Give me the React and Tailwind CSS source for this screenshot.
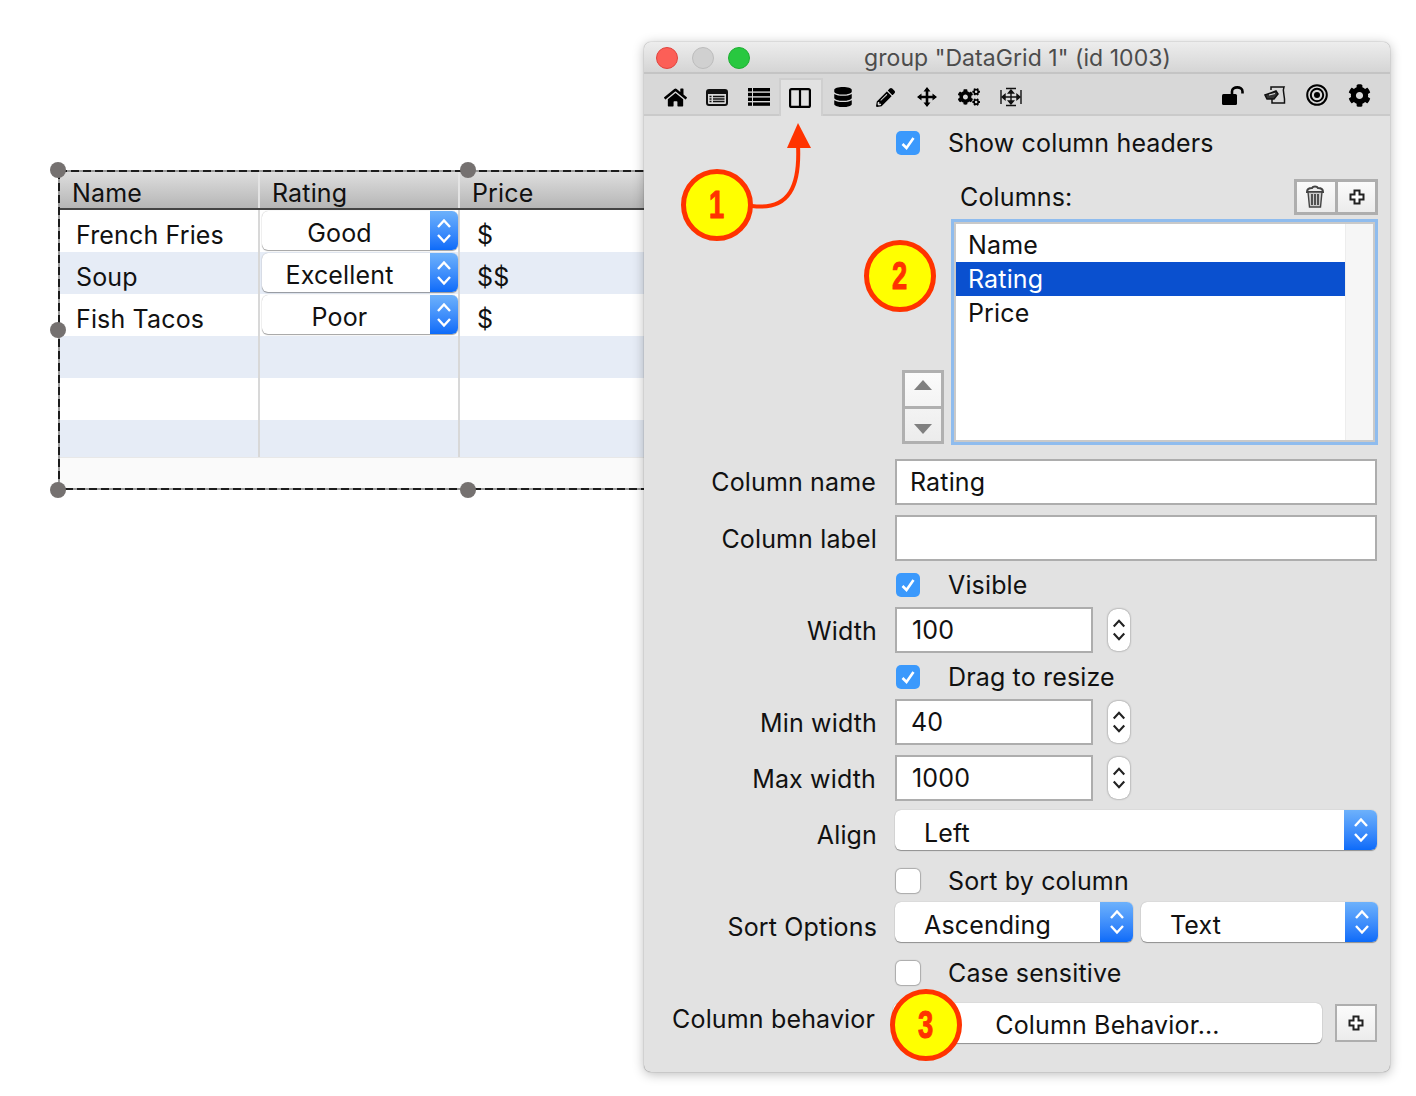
import { FaHome, FaDatabase, FaPencilAlt, FaCogs, FaCog } from "react-icons/fa";

const font = { fontFamily: "Inter, 'Liberation Sans', sans-serif", letterSpacing: "0.15px" };

function Chevrons({ className = "text-white", w = 16, h = 30 }) {
  return (
    <svg width={w} height={h} viewBox="0 0 16 30" fill="none" stroke="currentColor" strokeWidth="2.4" className={className}>
      <path d="M2 11 L8 4.5 L14 11" />
      <path d="M2 19 L8 25.5 L14 19" />
    </svg>
  );
}

function Select({ label, className, textClass = "justify-center", blue = "w-[33px]" }) {
  return (
    <div className={`flex bg-white rounded-[6px] shadow-[0_1px_1px_rgba(0,0,0,0.35),0_0_1px_rgba(0,0,0,0.3)] overflow-hidden ${className}`}>
      <div className={`flex-1 flex items-center text-[#111] ${textClass}`}>{label}</div>
      <div className={`${blue} flex items-center justify-center bg-gradient-to-b from-[#6db1fb] to-[#0b6bf9]`}>
        <Chevrons />
      </div>
    </div>
  );
}

function Check({ on }) {
  return on ? (
    <div className="w-6 h-6 rounded-[5px] bg-[#3b99fc] flex items-center justify-center shrink-0">
      <svg width="16" height="14" viewBox="0 0 16 14" fill="none" stroke="white" strokeWidth="2.6">
        <path d="M2.5 8 L6.5 12 L13.5 2" />
      </svg>
    </div>
  ) : (
    <div className="w-6 h-6 rounded-[5px] bg-white shadow-[0_0_1px_1px_rgba(0,0,0,0.25)] shrink-0" />
  );
}

function Row({ label, labelClass = "", className = "", children }) {
  return (
    <div className={`flex items-center ${className}`}>
      <div className={`w-[233px] text-right text-[#111] whitespace-nowrap ${labelClass}`}>{label}</div>
      <div className="ml-[18px] flex-1 flex items-center">{children}</div>
    </div>
  );
}

function CheckRow({ on, label, className }) {
  return (
    <Row className={`h-6 ${className}`}>
      <div className="ml-[1px]"><Check on={on} /></div>
      <span className="ml-7 text-[#111] whitespace-nowrap">{label}</span>
    </Row>
  );
}

function TextInput({ value, className, pad = "pl-[13px]" }) {
  return (
    <div className={`h-[46px] bg-white border-2 border-[#adadad] flex items-center text-[#111] ${pad} ${className}`}>{value}</div>
  );
}

function Stepper() {
  return (
    <div className="ml-[15px] w-[22px] h-[42px] rounded-[9px] bg-white shadow-[0_0_2px_rgba(0,0,0,0.5)] flex items-center justify-center">
      <Chevrons className="text-[#222]" w={14} h={28} />
    </div>
  );
}

function PlusGlyph() {
  return (
    <svg width="16" height="16" viewBox="0 0 16 16" fill="#fff" stroke="#222" strokeWidth="2">
      <path d="M5.5 1.5 H10.5 V5.5 H14.5 V10.5 H10.5 V14.5 H5.5 V10.5 H1.5 V5.5 H5.5 Z" />
    </svg>
  );
}

function ToolBtn({ children }) {
  return (
    <div className="w-[42px] h-[36px] pt-[6px] flex items-center justify-center text-black">
      {children}
    </div>
  );
}

function TopGrid() {
  const rows = [
    ["French Fries", "Good", "$", "bg-white"],
    ["Soup", "Excellent", "$$", "bg-[#e6ecf6]"],
    ["Fish Tacos", "Poor", "$", "bg-white"],
    ["", "", "", "bg-[#e6ecf6]"],
    ["", "", "", "bg-white"],
    ["", "", "", "bg-[#e6ecf6]"],
  ];
  return (
    <div className="absolute left-[60px] top-[172px] w-[600px] h-[316px] bg-[#fafafa] text-[25px] text-[#111]" style={font}>
      <div className="flex h-[38px] border-b-2 border-[#444] bg-gradient-to-b from-[#dedede] to-[#b6b6b6]">
        <div className="w-[200px] pl-[12px] pt-[8px] border-r-2 border-[#e4e4e4] flex items-center">Name</div>
        <div className="w-[200px] pl-[12px] pt-[8px] border-r-2 border-[#e4e4e4] flex items-center">Rating</div>
        <div className="flex-1 pl-[12px] pt-[8px] flex items-center">Price</div>
      </div>
      {rows.map((r, i) => (
        <div key={i} className={`flex ${i === 5 ? "h-[38px] border-b border-[#e8e8e8]" : "h-[42px]"} ${r[3]}`}>
          <div className="w-[200px] pl-[16px] pt-[9px] border-r-2 border-[#d8d8d8] leading-[32px]">{r[0]}</div>
          <div className="w-[200px] pt-[1px] border-r-2 border-[#d8d8d8] pl-[2px]">
            {r[1] && <Select label={r[1]} className="h-[39px] w-[196px]" textClass="justify-center pr-[13px] pt-[6px]" blue="w-[28px]" />}
          </div>
          <div className="flex-1 pl-[17px] pt-[9px] leading-[32px]">{r[2]}</div>
        </div>
      ))}
    </div>
  );
}

function Marquee() {
  const handles = [
    "left-[50px] top-[162px]",
    "left-[460px] top-[162px]",
    "left-[50px] top-[322px]",
    "left-[50px] top-[482px]",
    "left-[460px] top-[482px]",
  ];
  return (
    <>
      <svg className="absolute left-0 top-0" width="700" height="500" fill="none">
        <rect x="59" y="171" width="640" height="318" stroke="#9a9a9a" strokeWidth="2" />
        <rect x="59" y="171" width="640" height="318" stroke="#1c1c1c" strokeWidth="2" strokeDasharray="8 4" />
      </svg>
      {handles.map((h) => (
        <div key={h} className={`absolute w-4 h-4 rounded-full bg-[#757170] ${h}`} />
      ))}
    </>
  );
}

function Badge({ n, className }) {
  return (
    <div className={`absolute w-[72px] h-[72px] rounded-full bg-[#ffff00] border-[5px] border-[#ff3300] flex items-center justify-center ${className}`}>
      <span className="inline-block scale-x-[0.72] text-[38px] font-bold text-[#ff3300] leading-none" style={{ fontFamily: "'Liberation Sans', sans-serif", WebkitTextStroke: "1px #ff3300" }}>{n}</span>
    </div>
  );
}

export default function App() {
  return (
    <div className="relative w-[1416px] h-[1096px] bg-white overflow-hidden">
      <TopGrid />
      <Marquee />

      {/* Inspector window */}
      <div className="absolute left-[644px] top-[42px] w-[746px] h-[1030px] rounded-[7px] bg-[#e2e2e2] overflow-hidden shadow-[0_2px_12px_rgba(0,0,0,0.28),0_0_1px_rgba(0,0,0,0.6)] text-[25px]" style={font}>
        {/* Title bar */}
        <div className="relative h-[32px] bg-gradient-to-b from-[#ededed] to-[#d5d5d5] border-b-2 border-[#c4c4c4] flex items-center justify-center pt-[2px]">
          <div className="absolute left-[12px] top-[5px] flex gap-[14px]">
            <div className="w-[22px] h-[22px] rounded-full bg-[#fc5f57] border border-[#e0443e]" />
            <div className="w-[22px] h-[22px] rounded-full bg-[#d0d0d0] border border-[#bcbcbc]" />
            <div className="w-[22px] h-[22px] rounded-full bg-[#28c840] border border-[#1fae33]" />
          </div>
          <span className="text-[#4c4c4c] text-[23px] ml-[1px] tracking-[0.05px]">group "DataGrid 1" (id 1003)</span>
        </div>

        {/* Toolbar */}
        <div className="relative h-[42px] bg-[#d8d8d8] border-b-2 border-[#cacaca] flex items-center justify-between px-[10px]">
          <div className="flex items-center">
            <ToolBtn><FaHome size={23} /></ToolBtn>
            <ToolBtn>
              <svg width="22" height="17" viewBox="0 0 22 17" fill="none" stroke="#111">
                <rect x="1" y="1" width="20" height="15" rx="2" strokeWidth="2" />
                <path d="M1 3.2 H21" strokeWidth="3.6" />
                <path d="M3.5 7.5 H5.5 M7 7.5 H18.5 M3.5 10 H5.5 M7 10 H18.5 M3.5 12.5 H5.5 M7 12.5 H18.5" strokeWidth="1.3" />
              </svg>
            </ToolBtn>
            <ToolBtn>
              <svg width="22" height="18" viewBox="0 0 22 18" fill="#000">
                <rect x="0" y="0" width="4" height="3.4" /><rect x="5" y="0" width="17" height="3.4" />
                <rect x="0" y="4.8" width="4" height="3.4" /><rect x="5" y="4.8" width="17" height="3.4" />
                <rect x="0" y="9.6" width="4" height="3.4" /><rect x="5" y="9.6" width="17" height="3.4" />
                <rect x="0" y="14.4" width="4" height="3.4" /><rect x="5" y="14.4" width="17" height="3.4" />
              </svg>
            </ToolBtn>
            <div className="relative z-10 w-[44px] h-[38px] -mx-[1px] -mb-[4px] self-end bg-[#e2e2e2] border-2 border-b-0 border-[#cfcfcf] flex items-center justify-center pr-[2px]">
              <svg width="22" height="20" viewBox="0 0 22 20" fill="none" stroke="#000" strokeWidth="2.2">
                <rect x="1.1" y="1.1" width="19.8" height="17.8" rx="1.5" />
                <path d="M11 1 V19" />
              </svg>
            </div>
            <ToolBtn><FaDatabase size={20} /></ToolBtn>
            <ToolBtn><FaPencilAlt size={19} /></ToolBtn>
            <ToolBtn>
              <svg width="20" height="20" viewBox="0 0 20 20" fill="#000" stroke="#000">
                <path d="M10 2 V18 M2 10 H18" strokeWidth="2.6" />
                <path d="M10 0 L13.5 4.5 H6.5 Z M10 20 L13.5 15.5 H6.5 Z M0 10 L4.5 6.5 V13.5 Z M20 10 L15.5 6.5 V13.5 Z" strokeWidth="0" />
              </svg>
            </ToolBtn>
            <ToolBtn><FaCogs size={22} /></ToolBtn>
            <ToolBtn>
              <svg width="22" height="20" viewBox="0 0 22 20" fill="none" stroke="#111" strokeWidth="1.4">
                <path d="M1 3 V17 M21 3 V17 M6 1.5 H16 M6 18.5 H16 M11 3 V17 M2 10 H20" />
                <path d="M2 10 L5 7.5 V12.5 Z M20 10 L17 7.5 V12.5 Z M11 3 L8.5 6 H13.5 Z M11 17 L8.5 14 H13.5 Z" fill="#111" />
              </svg>
            </ToolBtn>
          </div>
          <div className="flex items-center -mt-[4px]">
            <ToolBtn>
              <svg width="22" height="19" viewBox="0 0 22 19" fill="#000">
                <rect x="0" y="8" width="15" height="11" rx="1.5" />
                <path d="M10 8 V5.5 C10 0 20.5 0 20.5 5.5 V7.5" fill="none" stroke="#000" strokeWidth="2.6" />
              </svg>
            </ToolBtn>
            <ToolBtn>
              <svg width="22" height="20" viewBox="0 0 22 20" fill="none" stroke="#111" strokeWidth="1.5">
                <path d="M7 5 V2 H20 C18 6 21 9 20.5 18 H8 V14" />
                <path d="M1 10 L12 6 L14 9 L10 14 L3 14 Z" fill="#333" />
                <path d="M5 10 L11 8.5" stroke="#ddd" strokeWidth="1.2" />
              </svg>
            </ToolBtn>
            <ToolBtn>
              <svg width="22" height="22" viewBox="0 0 22 22" fill="none" stroke="#000">
                <circle cx="11" cy="11" r="9.8" strokeWidth="2" />
                <circle cx="11" cy="11" r="6.2" strokeWidth="2" />
                <circle cx="11" cy="11" r="3" fill="#000" strokeWidth="0" />
              </svg>
            </ToolBtn>
            <ToolBtn><FaCog size={23} /></ToolBtn>
          </div>
        </div>

        {/* Body */}
        <div className="pr-[13px] pt-[12px] leading-[30px]">
          <Row className="h-[30px]">
            <div className="ml-[1px]"><Check on /></div>
            <span className="ml-7 text-[#111] whitespace-nowrap">Show column headers</span>
          </Row>

          <div className="mt-[21px] h-[36px] flex items-center">
            <span className="ml-[316px] text-[#111]">Columns:</span>
            <div className="ml-auto -mr-[1px] flex">
              <div className="w-[44px] h-[36px] border-[3px] border-[#aeaeae] bg-gradient-to-b from-[#fbfbfb] to-[#ececec] flex items-center justify-center pr-[2px]">
                <svg width="20" height="24" viewBox="0 0 20 24" fill="none" stroke="#444" strokeWidth="1.4">
                  <path d="M2 7 C2 3 6 3 7 3 C8 1 12 1 13 3 C15 3 18 3 18 7 Z" fill="#eee" strokeWidth="2" />
                  <path d="M3 7 L4.5 22 H15.5 L17 7 Z" fill="#ccc" />
                  <path d="M7 9 V20 M10 9 V20 M13 9 V20" strokeWidth="1.8" />
                </svg>
              </div>
              <div className="w-[40px] h-[36px] border-[3px] border-l-0 border-[#aeaeae] bg-gradient-to-b from-[#fbfbfb] to-[#ececec] flex items-center justify-center">
                <PlusGlyph />
              </div>
            </div>
          </div>

          <div className="mt-[4px] h-[226px] flex items-end">
            <div className="ml-[258px] w-[42px] h-[74px] border-[3px] border-[#b0b0b0] bg-gradient-to-b from-[#fbfbfb] to-[#ececec] mb-[1px] flex flex-col">
              <div className="flex-1 flex items-center justify-center pb-[8px] border-b-[3px] border-[#b0b0b0]">
                <svg width="18" height="10" viewBox="0 0 18 10" fill="#808080"><path d="M9 0 L18 10 H0 Z" /></svg>
              </div>
              <div className="flex-1 flex items-center justify-center pt-[8px]">
                <svg width="18" height="10" viewBox="0 0 18 10" fill="#808080"><path d="M9 10 L18 0 H0 Z" /></svg>
              </div>
            </div>
            <div className="ml-[7px] w-[427px] -mr-[1px] h-[226px] border-[3px] border-[#8fbcee]">
              <div className="h-full border-2 border-[#c9c9c9] bg-white flex">
                <div className="flex-1 pt-[4px] text-[#111]">
                  <div className="h-[34px] pl-[12px] flex items-center">Name</div>
                  <div className="h-[34px] pl-[12px] flex items-center bg-[#0a50cf] text-white">Rating</div>
                  <div className="h-[34px] pl-[12px] flex items-center">Price</div>
                </div>
                <div className="w-[28px] bg-[#f6f6f6] border-l border-[#ededed]" />
              </div>
            </div>
          </div>

          <Row label="Column name" labelClass="pr-[1px]" className="mt-[14px] h-[46px]"><TextInput value="Rating" className="flex-1" /></Row>
          <Row label="Column label" labelClass="pt-[2px]" className="mt-[10px] h-[46px]"><TextInput className="flex-1" /></Row>
          <CheckRow on label="Visible" className="mt-[12px]" />
          <Row label="Width" labelClass="pt-[2px]" className="mt-[10px] h-[46px]"><TextInput value="100" pad="pl-[15px]" className="w-[198px]" /><Stepper /></Row>
          <CheckRow on label="Drag to resize" className="mt-[12px]" />
          <Row label="Min width" labelClass="pt-[2px]" className="mt-[10px] h-[46px]"><TextInput value="40" pad="pl-[14px]" className="w-[198px]" /><Stepper /></Row>
          <Row label="Max width" labelClass="pt-[2px] pr-[1px]" className="mt-[10px] h-[46px]"><TextInput value="1000" pad="pl-[15px]" className="w-[198px]" /><Stepper /></Row>
          <Row label="Align" labelClass="pt-[10px]" className="mt-[9px] h-[40px]">
            <Select label="Left" className="flex-1 h-[40px]" textClass="justify-start pl-[29px] pt-[6px]" />
          </Row>
          <CheckRow label="Sort by column" className="mt-[19px]" />
          <Row label="Sort Options" labelClass="pt-[10px]" className="mt-[9px] h-[40px]">
            <Select label="Ascending" className="w-[238px] h-[40px]" textClass="justify-start pl-[29px] pt-[6px]" />
            <Select label="Text" className="ml-2 flex-1 h-[40px] -mr-[1px]" textClass="justify-start pl-[29px] pt-[6px]" />
          </Row>
          <CheckRow label="Case sensitive" className="mt-[19px]" />
          <Row label="Column behavior" labelClass="pb-[8px] -mr-[2px]" className="mt-[18px] h-[40px]">
            <div className="w-[429px] h-[40px] bg-white rounded-[6px] shadow-[0_1px_1px_rgba(0,0,0,0.35),0_0_1px_rgba(0,0,0,0.3)] flex items-center justify-center text-[#111] pt-[4px] ml-[2px]">Column Behavior...</div>
            <div className="ml-[13px] w-[42px] h-[38px] border-2 border-[#aeaeae] bg-gradient-to-b from-[#fbfbfb] to-[#ececec] flex items-center justify-center">
              <PlusGlyph />
            </div>
          </Row>
        </div>
      </div>

      {/* Callouts */}
      <svg className="absolute left-[740px] top-[115px]" width="80" height="100" viewBox="0 0 80 100" fill="none">
        <path d="M12 91 C50 96 60 70 58 30" stroke="#ff3300" strokeWidth="4" />
        <path d="M58 8 L71 33 H47 Z" fill="#ff3300" />
      </svg>
      <Badge n="1" className="left-[681px] top-[169px]" />
      <Badge n="2" className="left-[864px] top-[240px]" />
      <Badge n="3" className="left-[890px] top-[989px]" />
    </div>
  );
}
